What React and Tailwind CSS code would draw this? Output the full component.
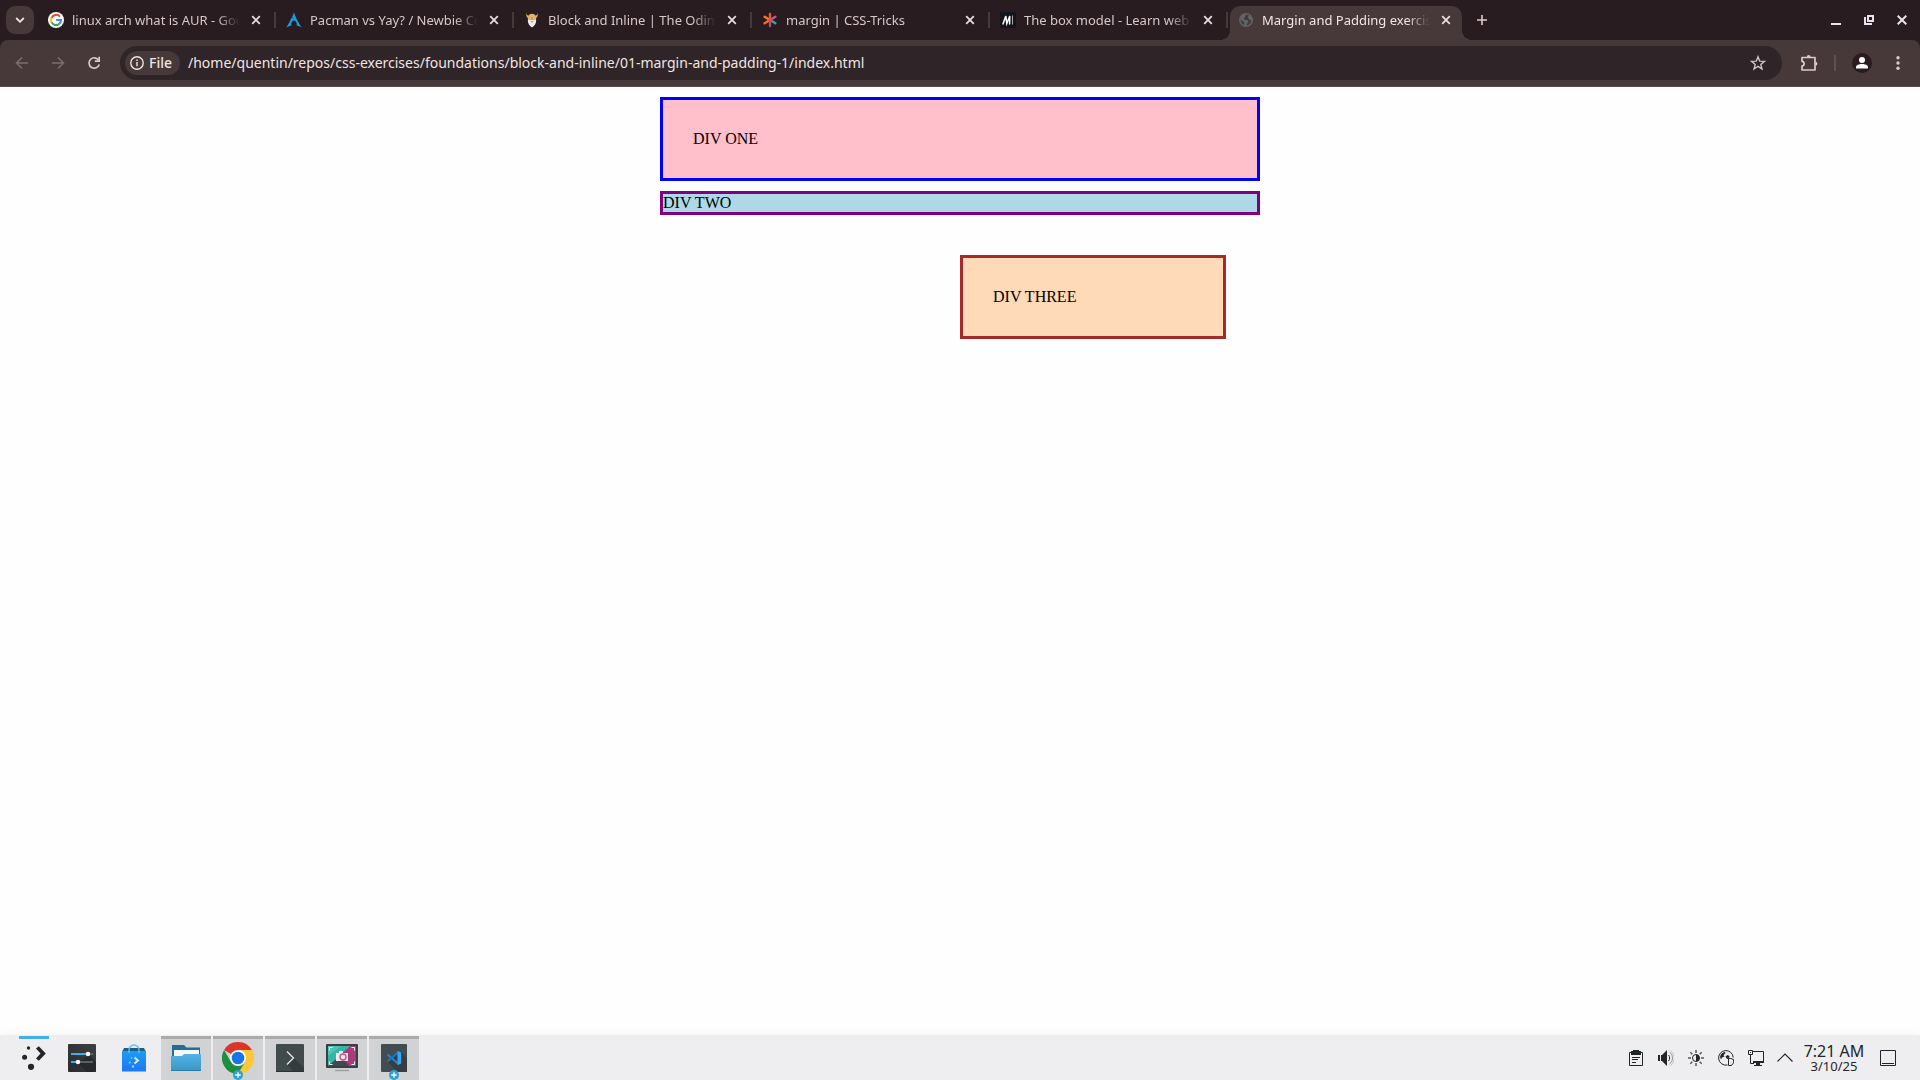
import React from "react";

/* ---------- favicons ---------- */
function GoogleIcon() {
  return (
    <svg width="16" height="16" viewBox="0 0 16 16">
      <circle cx="8" cy="8" r="8" fill="#fff" />
      <g fill="none" strokeWidth="2">
        <path d="M11.9 4.6A5 5 0 0 0 3.6 5.7" stroke="#ea4335" />
        <path d="M3.6 5.7A5 5 0 0 0 3.6 10.4" stroke="#fbbc05" />
        <path d="M3.6 10.4A5 5 0 0 0 11.3 11.8" stroke="#34a853" />
        <path d="M11.3 11.8A5 5 0 0 0 13 8H8.2" stroke="#4285f4" />
      </g>
    </svg>
  );
}

function ArchIcon() {
  return (
    <svg width="16" height="16" viewBox="0 0 16 16">
      <path
        d="M8 .4C7.3 2.200 6.800 3.400 6 5.100c.5.5 1.100 1.100 2 1.800-1-.4-1.700-.8-2.300-1.300C4.600 8 3 11.200.3 15.600c1.900-1.100 3.500-1.800 5-2.100-.4-3 1-5 2.700-5s3.100 2 2.700 5c1.500.3 3.100 1 5 2.100C11.200 8.700 9.500 5 8 .4z"
        fill="#1f9bde"
      />
    </svg>
  );
}

function OdinIcon() {
  return (
    <svg width="16" height="16" viewBox="0 0 16 16">
      <path d="M2.200.6c.2 1.800 1 2.900 2.600 3.300L4 6.600C2.400 5 1.800 2.800 2.200.6zM13.800.6c-.2 1.800-1 2.900-2.600 3.300l.8 2.700c1.600-1.600 2.200-3.800 1.800-6z" fill="#d9a562" />
      <path d="M4 5.500C4 3 5.800 1.800 8 1.800S12 3 12 5.500V9H4z" fill="#e5b36b" />
      <path d="M3.800 7.600 6.300 8.600 8 7.600l1.700 1 2.500-1c.2 3.400-1.300 6.400-4.200 8-2.900-1.600-4.400-4.600-4.200-8z" fill="#ececec" />
      <path d="M7.300 5h1.400v3H7.300z" fill="#c98f4a" />
      <path d="M6.800 9.800h2.400" stroke="#9a8f8a" />
    </svg>
  );
}

function CssTricksIcon() {
  return (
    <svg width="16" height="16" viewBox="0 0 16 16" strokeWidth="2.400" strokeLinecap="round">
      <path d="M8 8V2" stroke="#f0523d" />
      <path d="M8 8 2.600 4.800" stroke="#ff7a18" />
      <path d="M8 8 2.600 11.300" stroke="#ff6a2a" />
      <path d="M8 8v6" stroke="#a4527e" />
      <path d="m8 8 5.400-3.200" stroke="#b0608a" />
      <path d="m8 8 2.500 1.500" stroke="#c0507a" />
      <path d="m11 9.800 2.400 1.500" stroke="#2fa7b5" />
      <circle cx="8" cy="8" r="1.600" fill="#f0443d" stroke="none" />
    </svg>
  );
}

function MdnIcon() {
  return (
    <svg width="16" height="16" viewBox="0 0 16 16">
      <rect width="16" height="16" fill="#14141c" />
      <path d="M2.800 12.500 5.800 4 6.800 11.500 9.800 4 9.600 12.500" fill="none" stroke="#fff" strokeWidth="1.500" />
      <path d="M12.500 3.500v9" stroke="#a9a9b0" />
    </svg>
  );
}

function GlobeIcon() {
  return (
    <svg width="16" height="16" viewBox="0 0 16 16">
      <circle cx="8" cy="8" r="7" fill="#5f6368" />
      <path d="M8.500 2.600 7 4v1.600L5.500 6.500 7 8h2.500l1 1.300-1 1.700L8 13.500c3.200-.2 5.200-2.500 5.300-5l-2.300-.9-1-2 .8-2.300zM2.600 7.400 5 9.500l1.200.6v2.800C3.900 12 2.500 10 2.600 7.400z" fill="#473839" />
    </svg>
  );
}

/* ---------- browser glyphs ---------- */
function CloseGlyph() {
  return (
    <svg width="10" height="10" viewBox="0 0 10 10" fill="none" stroke="currentColor" strokeWidth="1.800">
      <path d="m1.200 1.200 7.600 7.600M8.800 1.200 1.200 8.800" />
    </svg>
  );
}

const tabs = [
  { title: "linux arch what is AUR - Google Search", Icon: GoogleIcon },
  { title: "Pacman vs Yay? / Newbie Corner", Icon: ArchIcon },
  { title: "Block and Inline | The Odin Project", Icon: OdinIcon },
  { title: "margin | CSS-Tricks", Icon: CssTricksIcon },
  { title: "The box model - Learn web development", Icon: MdnIcon },
  { title: "Margin and Padding exercise", Icon: GlobeIcon, active: true },
];

function Tab({ title, Icon, active }) {
  const shape = active
    ? "relative rounded-t-[10px] bg-[#473839] text-[#f0e4e4] before:absolute before:bottom-0 before:-left-2.5 before:size-2.5 before:bg-[radial-gradient(circle_at_0_0,transparent_10px,#473839_10px)] after:absolute after:bottom-0 after:-right-2.5 after:size-2.5 after:bg-[radial-gradient(circle_at_100%_0,transparent_10px,#473839_10px)]"
    : "text-[#d9c6c7]";
  return (
    <li className="flex h-[34px] w-[238px] min-w-0 pl-0.5">
      <div className={`flex min-w-0 flex-1 items-center gap-1.5 pr-1.5 pb-1.5 pl-2 ${shape}`}>
        <button className="flex min-w-0 flex-1 items-center gap-2 text-left">
          <span className="shrink-0">
            <Icon />
          </span>
          <span className="flex-1 overflow-hidden text-[13px] leading-5 whitespace-nowrap [mask-image:linear-gradient(to_right,black_86%,transparent)]">
            {title}
          </span>
        </button>
        <button aria-label={`Close ${title}`} className="flex size-5 shrink-0 items-center justify-center text-[#eadcdc]">
          <CloseGlyph />
        </button>
      </div>
      <span className={`mt-1.5 ml-0.5 h-4 w-0.5 ${active ? "" : "bg-[#473839]"}`} />
    </li>
  );
}

function TabBar() {
  return (
    <div className="flex h-10 items-start bg-[#281c20] pt-1.5 pl-1.5">
      <button aria-label="Search tabs" className="mr-1 flex size-7 shrink-0 items-center justify-center rounded-[9px] bg-[#473839] text-[#f0e4e4]">
        <svg width="10" height="10" viewBox="0 0 10 10" fill="none" stroke="currentColor" strokeWidth="1.800">
          <path d="M1.200 3 5 6.800 8.800 3" />
        </svg>
      </button>
      <ul className="flex min-w-0">
        {tabs.map((t) => (
          <Tab key={t.title} {...t} />
        ))}
      </ul>
      <button aria-label="New tab" className="ml-0.5 flex size-7 shrink-0 items-center justify-center text-[#e0c8c9]">
        <svg width="10" height="10" viewBox="0 0 10 10" fill="none" stroke="currentColor" strokeWidth="1.600">
          <path d="M5 0v10M0 5h10" />
        </svg>
      </button>
      <div className="mr-2 ml-auto flex gap-[13px] text-[#e9e3ec]">
        <button aria-label="Minimize" className="flex h-7 w-5 items-center justify-center">
          <svg width="10" height="10" viewBox="0 0 10 10" fill="currentColor">
            <path d="M0 8h10v2H0z" />
          </svg>
        </button>
        <button aria-label="Restore" className="flex h-7 w-5 items-center justify-center">
          <svg width="10" height="10" viewBox="0 0 10 10" fill="none" stroke="currentColor" strokeWidth="2">
            <path d="M4 1h5v5H4z" />
            <path d="M1 2v7h7" />
          </svg>
        </button>
        <button aria-label="Close window" className="flex h-7 w-5 items-center justify-center">
          <svg width="10" height="10" viewBox="0 0 10 10" fill="none" stroke="currentColor" strokeWidth="2">
            <path d="m.7.7 8.600 8.600M9.300.7.7 9.300" />
          </svg>
        </button>
      </div>
    </div>
  );
}

function Toolbar() {
  return (
    <div className="bg-[#281c20]">
      <div className="flex h-[47px] items-center rounded-t-lg border-b border-[#5a4a4b] bg-[#473839] pr-3 pl-3 text-[#e0c8c9]">
        <button aria-label="Back" className="flex size-5 items-center justify-center text-[#7d6c6d]">
          <svg width="14" height="14" viewBox="0 0 14 14" fill="none" stroke="currentColor" strokeWidth="1.600">
            <path d="M13 7H2M7 1.500 1.500 7 7 12.500" />
          </svg>
        </button>
        <button aria-label="Forward" className="ml-4 flex size-5 items-center justify-center text-[#7d6c6d]">
          <svg width="14" height="14" viewBox="0 0 14 14" fill="none" stroke="currentColor" strokeWidth="1.600">
            <path d="M1 7h11M7 1.500 12.500 7 7 12.500" />
          </svg>
        </button>
        <button aria-label="Reload" className="ml-4 flex size-5 items-center justify-center">
          <svg width="14" height="14" viewBox="0 0 14 14" fill="none" stroke="currentColor" strokeWidth="1.700">
            <path d="M11.500 4A5.200 5.200 0 1 0 12.200 8.500" />
            <path d="M12.200.8v4.400H7.800" />
          </svg>
        </button>
        <div className="ml-4 flex h-[34px] flex-1 items-center rounded-full bg-[#2f2427] pr-4 pl-[5px]">
          <button className="flex h-6 items-center gap-[5px] rounded-full bg-[#473839] pr-2 pl-[5px] text-sm leading-5 font-medium text-[#f0e4e4]">
            <svg width="14" height="14" viewBox="0 0 14 14" fill="none" stroke="currentColor" strokeWidth="1.400">
              <circle cx="7" cy="7" r="6.200" />
              <path d="M7 6v4.200M7 3.500v1.500" />
            </svg>
            File
          </button>
          <input
            aria-label="Address"
            className="ml-2 min-w-0 flex-1 bg-transparent text-sm text-[#f0e4e4] outline-none"
            defaultValue="/home/quentin/repos/css-exercises/foundations/block-and-inline/01-margin-and-padding-1/index.html"
          />
          <button aria-label="Bookmark this page">
            <svg width="16" height="16" viewBox="0 0 16 16" fill="none" stroke="#cfc0c1" strokeWidth="1.400">
              <path d="m8 1.800 1.700 4.300 4.700.3-3.600 3 1.200 4.500L8 11.400l-4 2.500 1.200-4.500-3.600-3 4.700-.3z" />
            </svg>
          </button>
        </div>
        <button aria-label="Extensions" className="ml-[18px]">
          <svg width="18" height="18" viewBox="0 0 18 18">
            <path d="M2 3.500h13v12.500H2v-4c2.800-.4 2.800-4.200 0-4.600z" fill="none" stroke="currentColor" strokeWidth="1.700" strokeLinejoin="round" />
            <path d="M6.800 3a1.900 1.900 0 0 1 3.800 0zM15.500 7.800a1.900 1.900 0 0 1 0 3.800z" fill="currentColor" />
          </svg>
        </button>
        <span className="ml-4 h-4 w-0.5 bg-[#5f5051]" />
        <button aria-label="Profile" className="ml-4">
          <svg width="20" height="20" viewBox="0 0 20 20">
            <circle cx="10" cy="10" r="10" fill="#281c20" />
            <circle cx="10" cy="7" r="3" fill="#fff" />
            <path d="M4 15.500v-1.300c0-2.200 3-3.200 6-3.200s6 1 6 3.200v1.300z" fill="#fff" />
          </svg>
        </button>
        <button aria-label="Menu" className="ml-4 flex size-5 items-center justify-center">
          <svg width="4" height="14" viewBox="0 0 4 14" fill="currentColor">
            <circle cx="2" cy="1.800" r="1.700" />
            <circle cx="2" cy="7" r="1.700" />
            <circle cx="2" cy="12.200" r="1.700" />
          </svg>
        </button>
      </div>
    </div>
  );
}

function Page() {
  return (
    <main className="flex-1 bg-[#fefefe] pt-2.5 font-['Liberation_Serif',serif] text-base leading-[18px] text-black">
      <div className="mx-auto w-[600px] max-w-full">
        <div className="border-3 border-[#0000ff] bg-[#ffc0cb] p-[30px]">DIV ONE</div>
        <div className="mt-2.5 border-3 border-[#800080] bg-[#add8e6]">DIV TWO</div>
        <div className="mt-10 mr-[34px] ml-[50%] border-3 border-[#a52a2a] bg-[#ffdab9] p-[30px]">DIV THREE</div>
      </div>
    </main>
  );
}

/* ---------- desktop panel ---------- */
function LauncherIcon() {
  return (
    <svg width="24" height="26" viewBox="0 0 24 26" fill="#232629">
      <circle cx="6.500" cy="3" r="1.700" />
      <circle cx="2.600" cy="12.300" r="2.500" />
      <circle cx="9" cy="21.800" r="3.100" />
      <path d="m14 3.500 2.800-2.300 7 7.300-7 7.300L14 13.400l4.500-4.900z" />
    </svg>
  );
}

function SettingsIcon() {
  return (
    <svg width="28" height="28" viewBox="0 0 28 28">
      <defs>
        <linearGradient id="set" x1="0" y1="1" x2="1" y2="0">
          <stop offset="0" stopColor="#2a2c2f" />
          <stop offset="1" stopColor="#3d4043" />
        </linearGradient>
      </defs>
      <rect width="28" height="28" rx="1" fill="url(#set)" />
      <path d="M10 19 21 11l7 7v10H19z" fill="#1f2123" opacity=".6" />
      <path d="M3 10h22M3 18h22" stroke="#5c6063" strokeWidth="2" />
      <path d="M3 10h17M3 18h7" stroke="#3daee9" strokeWidth="2" />
      <circle cx="20" cy="10" r="2.200" fill="#fff" />
      <circle cx="10" cy="18" r="2.200" fill="#fff" />
    </svg>
  );
}

function StoreIcon() {
  return (
    <svg width="26" height="28" viewBox="0 0 26 28">
      <defs>
        <linearGradient id="bag" x1="0" y1="0" x2="0" y2="1">
          <stop offset="0" stopColor="#1b9cf8" />
          <stop offset="1" stopColor="#1d78f2" />
        </linearGradient>
      </defs>
      <path d="M3 4h20l2 4H1z" fill="#1d5f86" />
      <path d="M1 7h24v20.500H1z" fill="url(#bag)" />
      <path d="M8 9V6a5 5 0 0 1 10 0v3" fill="none" stroke="#5fc0ee" strokeWidth="1.400" />
      <path d="m13.500 13.500 3.500 3-3.500 3" fill="none" stroke="#d4f0ff" strokeWidth="1.800" />
      <circle cx="10.500" cy="14" r=".8" fill="#8fd2ff" />
      <circle cx="8.800" cy="18.500" r="1" fill="#8fd2ff" />
      <circle cx="12" cy="22.500" r="1.200" fill="#8fd2ff" />
    </svg>
  );
}

function FolderIcon() {
  return (
    <svg width="30" height="28" viewBox="0 0 30 28">
      <defs>
        <linearGradient id="fold" x1="0" y1="0" x2="0" y2="1">
          <stop offset="0" stopColor="#55b4e3" />
          <stop offset="1" stopColor="#3a96c8" />
        </linearGradient>
      </defs>
      <path d="M1 1h12l2.500 2.500H29V16H1z" fill="#1f6f98" />
      <path d="M3 6h25v10H3z" fill="#f6f6f6" />
      <path d="M0 12h11l2-2h17v17H0z" fill="url(#fold)" />
      <path d="M0 26.500h30" stroke="#2d7ca6" />
    </svg>
  );
}

function PlusBadge() {
  return (
    <svg width="10" height="10" viewBox="0 0 10 10" className="absolute bottom-0 left-1/2 -translate-x-1/2">
      <circle cx="5" cy="5" r="5" fill="#2f9fd8" />
      <path d="M5 2.300v5.400M2.300 5h5.400" stroke="#fff" strokeWidth="1.300" />
    </svg>
  );
}

function ChromeIcon() {
  return (
    <svg width="32" height="32" viewBox="0 0 32 32">
      <path d="M16 16 2.140 8A16 16 0 0 1 29.860 8z" fill="#dd3427" />
      <path d="M16 8H29.860A16 16 0 0 1 16 32L22.930 20z" fill="#fcc934" />
      <path d="M2.140 8 9.070 20 16 24l6.930-4L16 32A16 16 0 0 1 2.140 8z" fill="#1e8e3e" />
      <circle cx="16" cy="16" r="8" fill="#fff" />
      <circle cx="16" cy="16" r="6.300" fill="#1a73e8" />
    </svg>
  );
}

function TerminalIcon() {
  return (
    <svg width="28" height="28" viewBox="0 0 28 28">
      <rect width="28" height="28" rx="1" fill="#414b4c" />
      <path d="m11 20 7-6 10 10v4H18z" fill="#333b3d" />
      <path d="M0 27.500h28" stroke="#2b3133" />
      <path d="m11 7.500 6.500 6.500-6.500 6.500" fill="none" stroke="#e6e8e8" strokeWidth="1.300" />
    </svg>
  );
}

function SpectacleIcon() {
  return (
    <svg width="32" height="28" viewBox="0 0 32 28">
      <rect y="0" width="32" height="24" rx="1" fill="#3b3f42" />
      <path d="M2 2h28v20H2z" fill="#38b5a5" />
      <path d="M2 12 15 2H2z" fill="#49c9b5" />
      <path d="M30 2v20H19l-7-9L24 2z" fill="#a83c78" />
      <path d="M2 22 15 11l8 11z" fill="#3c4a52" />
      <path d="M3.500 6.500v-3h3M25.500 3.500h3v3M28.500 17.500v3h-3M6.500 20.500h-3v-3" fill="none" stroke="#fff" />
      <path d="M10 9h3V7h4v2h5v8H10z" fill="#f3e9ef" />
      <circle cx="17" cy="13" r="3" fill="none" stroke="#c9508a" strokeWidth="1.400" />
      <path d="M9 26.500h14" stroke="#9fa3a6" strokeWidth="1.500" />
    </svg>
  );
}

function CodeIcon() {
  return (
    <svg width="28" height="28" viewBox="0 0 28 28">
      <rect x="1" width="26" height="28" rx="1" fill="#434c50" />
      <path d="m8 18 12-11 7 7v14H17z" fill="#363e42" />
      <path d="m7.500 10.500 10.500 9" fill="none" stroke="#1f83cf" strokeWidth="2.200" />
      <path d="m7.500 17.500 10.500-9" fill="none" stroke="#1976c0" strokeWidth="2.200" />
      <path d="m17.500 6.800 3.700 1.600v11.200l-3.700 1.600z" fill="#36a6f2" />
    </svg>
  );
}

const tasks = [
  { label: "Files", Icon: FolderIcon },
  { label: "Google Chrome", Icon: ChromeIcon, badge: true },
  { label: "Terminal", Icon: TerminalIcon },
  { label: "Screenshot", Icon: SpectacleIcon },
  { label: "Code", Icon: CodeIcon, badge: true },
];

const tray = [
  {
    label: "Clipboard",
    icon: (
      <>
        <path d="M1.500 2.500h13v13h-13z" fill="none" stroke="#232629" />
        <path d="M3 1h2V0h6v1h2v4H3z" />
        <path d="M4 7.500h8M4 9.500h6M4 12.500h4" stroke="#232629" />
      </>
    ),
  },
  {
    label: "Volume",
    icon: (
      <>
        <path d="M0 5h2v6H0zM3 5h1l5-5v16l-5-5H3z" />
        <path d="M10.500 5c1.600 1.500 1.600 4.500 0 6" fill="none" stroke="#232629" />
        <path d="M11.500 2c4 3 4 9 0 12" fill="none" stroke="#232629" opacity=".45" />
        <path d="M12.500.5c5 4 5 11 0 15" fill="none" stroke="#232629" opacity=".2" />
      </>
    ),
  },
  {
    label: "Brightness",
    icon: (
      <>
        <circle cx="8" cy="8" r="3.500" fill="none" stroke="#232629" />
        <path d="M8 4.500a3.500 3.500 0 0 1 0 7z" />
        <path d="M8 0v3M8 13v3M0 8h3M13 8h3M2.300 2.300l2 2M11.700 11.700l2 2M13.700 2.300l-2 2M4.300 11.700l-2 2" stroke="#55585b" strokeWidth="1.500" />
      </>
    ),
  },
  {
    label: "Updates",
    icon: (
      <>
        <path d="M9.500 15A7.300 7.300 0 1 1 15.200 7.500" fill="none" stroke="#232629" />
        <path d="M2 7c.6-2.800 2.400-4.600 5-5l.5 1.200L5.500 5l1 1.500-2.500 1L3 9.500zM7.500 6.500l2-1.500 2 1-.5 2.500-2 .5z" />
        <path d="M10.500 8.500h2.300l2.700 1v2c0 2-1 3.300-2.500 4h-2.500z" fill="#eeeef0" stroke="#232629" />
      </>
    ),
  },
  {
    label: "Network",
    icon: (
      <>
        <path d="M5 1.500h10.500v10H5" fill="none" stroke="#232629" />
        <path d="M5 11h11v2H5zM8 13h4v2h2v1H6v-1h2z" />
        <path d="M.5.500h4v4h-4z" fill="none" stroke="#232629" />
        <path d="M2.500 5v8.500H6" fill="none" stroke="#232629" />
        <path d="M2 2h1v1H2z" />
      </>
    ),
  },
];

function Panel() {
  return (
    <footer className="z-10 flex h-[45px] items-stretch bg-[#eeeef0] pt-px pr-[21px] pl-3 shadow-[0_0_10px_rgba(0,0,0,0.06)]">
      <nav className="flex gap-px">
        <button aria-label="Application launcher" className="relative flex w-11 items-center justify-center">
          <span className="absolute top-0 left-1/2 h-[3px] w-[30px] -translate-x-1/2 bg-[#43aee8]" />
          <LauncherIcon />
        </button>
        <div className="flex gap-0.5">
          <button aria-label="System settings" className="flex w-[50px] items-center justify-center">
            <SettingsIcon />
          </button>
          <button aria-label="Software store" className="flex w-[50px] items-center justify-center">
            <StoreIcon />
          </button>
          {tasks.map(({ label, Icon, badge }) => (
            <button
              key={label}
              aria-label={label}
              className="relative flex w-[50px] items-center justify-center border-t-3 border-[#a9abad] bg-[#d1d2d4] pb-[3px]"
            >
              <Icon />
              {badge && <PlusBadge />}
            </button>
          ))}
        </div>
      </nav>
      <div className="ml-auto flex items-center text-[#232629]">
        <div className="flex gap-2">
          {tray.map((t) => (
            <button key={t.label} aria-label={t.label} className="flex size-[22px] items-center justify-center">
              <svg width="16" height="16" viewBox="0 0 16 16" fill="#232629">
                {t.icon}
              </svg>
            </button>
          ))}
        </div>
        <button aria-label="Show hidden icons" className="ml-2 flex h-[22px] w-5 items-center justify-center">
          <svg width="16" height="10" viewBox="0 0 16 10" fill="none" stroke="#232629" strokeWidth="1.100">
            <path d="M.5 8.500 8 1l7.500 7.500" />
          </svg>
        </button>
        <button className="ml-1 flex w-[70px] flex-col items-center">
          <span className="text-base leading-4">7:21 AM</span>
          <span className="text-[13px] leading-[14px]">3/10/25</span>
        </button>
        <button aria-label="Show desktop" className="ml-2 flex size-[22px] items-center justify-center">
          <svg width="16" height="16" viewBox="0 0 16 16" fill="none" stroke="#232629">
            <path d="M.5.500h15v15H.5zM2 13.500h12" />
          </svg>
        </button>
      </div>
    </footer>
  );
}

export default function App() {
  return (
    <div className="flex min-h-screen flex-col bg-[#fefefe] font-['Noto_Sans',sans-serif]">
      <header>
        <TabBar />
        <Toolbar />
      </header>
      <Page />
      <Panel />
    </div>
  );
}
